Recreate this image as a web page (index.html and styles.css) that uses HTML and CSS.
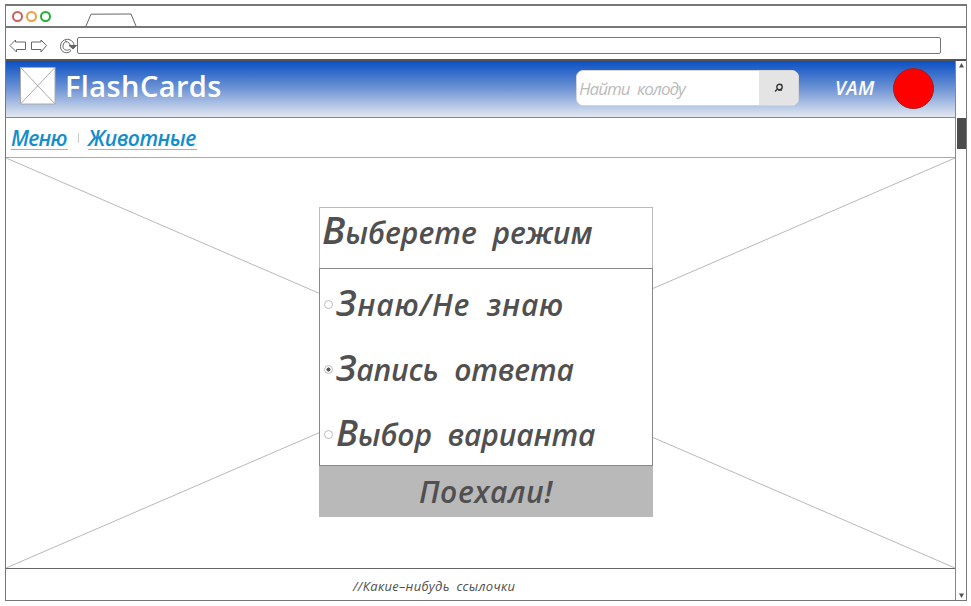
FILE: index.html
```html
<!DOCTYPE html>
<html lang="ru">
<head>
<meta charset="utf-8">
<title>FlashCards</title>
<link rel="stylesheet" href="styles.css">
</head>
<body>
<div class="browser">
  <div class="titlebar">
    <i class="dot red"></i><i class="dot orange"></i><i class="dot green"></i>
    <svg class="tab" width="52" height="13" viewBox="0 0 52 13"><path d="M1 13 6 1.2 46 1 51 13" /></svg>
  </div>
  <div class="toolbar">
    <svg class="nav" width="70" height="18" viewBox="0 0 70 18">
      <path d="M1 8.500 6.500 3V5H16.500V12.500H7.500V15Z M22.500 5H32V3L37.500 8.500 32 15V12.500H22.500Z"/>
      <path d="M62 13.500C59 17.500 51.500 16 51.500 9.500 51.500 4.500 55.500 1.500 60 2.500 63.500 3.500 65 6 65 8.500M54 9.500C54 5.500 57 3.500 59.500 5.500L62 9M54 9.500C54 13 58 14 60.500 12.500L62 13.500M56 3.500 58 5"/>
      <path class="tip" d="M60 8.500H67.500L64 12Z"/>
    </svg>
    <div class="address"></div>
  </div>
  <div class="viewport">
    <main class="page">
      <header class="header">
        <svg class="logo" width="36" height="38" viewBox="0 0 36 38"><path d="M.5.5H35V37H.5ZL35 37M35 .5.5 37"/></svg>
        <h1 class="brand">FlashCards</h1>
        <div class="search">
          <span class="query">Найти колоду</span>
          <button class="find" aria-label="Найти"><svg width="10" height="10" viewBox="0 0 10 10"><path d="M3.500 6 1 8.500"/><circle cx="5.500" cy="4" r="2.700"/><path d="M4 7H8"/></svg></button>
        </div>
        <span class="user">VAM</span>
        <i class="avatar"></i>
      </header>
      <nav class="crumbs"><a class="menu">Меню</a><i class="divider"></i><a class="animals">Животные</a></nav>
      <section class="hero">
        <svg class="cross" viewBox="0 0 950 411" preserveAspectRatio="none"><path d="M0 0 950 411M950 0 0 411"/></svg>
        <form class="card">
          <h2 class="question">Выберете режим</h2>
          <div class="options">
            <label class="option know"><i class="radio"></i><span>Знаю/Не знаю</span></label>
            <label class="option write"><i class="radio checked"></i><span>Запись ответа</span></label>
            <label class="option choose"><i class="radio"></i><span>Выбор варианта</span></label>
          </div>
          <button class="go" type="button">Поехали!</button>
        </form>
      </section>
      <footer class="footer">//Какие–нибудь ссылочки</footer>
    </main>
    <div class="scrollbar">
      <svg width="7" height="5" viewBox="0 0 7 5"><path d="M3.500 0 6 4.500H1Z"/></svg>
      <i class="thumb"></i>
      <svg width="7" height="5" viewBox="0 0 7 5"><path d="M1 .5H6L3.500 5Z"/></svg>
    </div>
  </div>
</div>
</body>
</html>
```

FILE: styles.css
```css
* { box-sizing: border-box; }
body { margin: 0; padding: 4px 4px 5px 5px; height: 606px; overflow: hidden; background: #fff; color: #505050; font-family: "Open Sans", "Noto Sans", sans-serif; }
svg { display: block; fill: none; stroke: #666; stroke-width: 1; flex: none; }
h1, h2 { margin: 0; font-weight: 600; }
button { border: 0; padding: 0; font: inherit; color: inherit; }
.browser { width: 962px; height: 597px; display: flex; flex-direction: column; border: 1px solid #777; border-top: 2px solid #777; }
.titlebar { flex: none; height: 22px; display: flex; gap: 4px; padding: 5px 0 0 6px; border-bottom: 2px solid #777; }
.dot { width: 11px; height: 11px; margin-right: -1px; border: 2px solid; border-radius: 50%; }
.red { color: #cb6060; }
.orange { color: #e9a04a; }
.green { color: #25ad35; }
.tab { margin: 2px 0 0 31px; }
.toolbar { flex: none; height: 33px; display: flex; border-bottom: 2px solid #555; padding: 9px 0 0 3px; }
.tip { fill: #666; }
.address { width: 864px; height: 17px; margin-left: -2px; border: 1px solid #777; border-radius: 2px; background: #fff; }
.viewport { flex: 1; display: flex; min-height: 0; }
.page { width: 950px; display: flex; flex-direction: column; border-right: 1px solid #888; }
.header { flex: none; height: 57px; display: flex; align-items: flex-start; background: linear-gradient(#0a50c3, #7095d5 50%, #e3e8f1); border-bottom: 1px solid #888; }
.logo { margin: 6px 0 0 14px; stroke: #aaa; }
.logo path { fill: #fff; }
.brand { width: 160px; margin: 3px 0 0 9px; color: #fff; font-size: 29px; line-height: 44px; letter-spacing: .4px; white-space: nowrap; }
.search { width: 223px; height: 36px; margin: 9px 0 0 351px; display: flex; border: 1px solid #d5d5d5; border-radius: 7px; overflow: hidden; background: #fff; }
.query { width: 182px; padding-left: 2px; color: #bbb; font-size: 17px; font-style: italic; font-weight: 500; line-height: 35px; white-space: nowrap; letter-spacing: -1px; word-spacing: 4px; }
.find { flex: 1; display: flex; justify-content: center; align-items: center; background: #e4e4e4; }
.find svg { stroke: #333; stroke-width: 1.4; }
.user { width: 42px; margin: 14px 0 0 36px; color: #fff; font-size: 19px; font-style: italic; font-weight: 600; line-height: 26px; letter-spacing: .5px; }
.avatar { width: 41px; height: 41px; margin: 7px 0 0 16px; border: 1px solid #922; border-radius: 50%; background: #f00; }
.crumbs { flex: none; height: 40px; display: flex; align-items: flex-start; padding: 7px 0 0 5px; border-bottom: 1px solid #aaa; color: #138dcc; font-size: 21px; font-weight: 600; font-style: italic; line-height: 26px; }
.crumbs a { height: 25px; border-bottom: 1px solid #7cbfe2; white-space: nowrap; }
.menu { width: 57px; letter-spacing: -.8px; }
.animals { width: 109px; letter-spacing: -.5px; }
.divider { width: 1px; height: 10px; margin: 8px 9px 0 10px; background: #ccc; }
.hero { flex: none; position: relative; height: 411px; padding: 49px 0 0 313px; border-bottom: 1px solid #666; }
.cross { position: absolute; inset: 0; width: 100%; height: 100%; stroke: #b8b8b8; }
.card { position: relative; width: 334px; height: 310px; display: flex; flex-direction: column; background: #fff; }
.question { flex: none; height: 61px; padding-left: 2px; border: 1px solid #bbb; border-bottom: 0; font-size: 30px; font-weight: 600; font-style: italic; line-height: 42px; letter-spacing: 0; word-spacing: 8px; white-space: nowrap; }
.question::first-letter { font-size: 38px; }
.options { flex: none; height: 198px; border: 1px solid #888; padding-top: 3px; }
.option { height: 65px; display: flex; align-items: center; padding-left: 4px; gap: 3px; font-size: 30px; font-weight: 600; font-style: italic; line-height: 38px; word-spacing: 8px; white-space: nowrap; }
.option span { display: block; margin-top: -2px; }
.option span::first-letter { font-size: 36px; }
.know { letter-spacing: .8px; }
.write { letter-spacing: -.15px; }
.choose { letter-spacing: -.15px; }
.radio { width: 9px; height: 9px; border: 1px solid #bbb; border-radius: 50%; }
.checked { background: radial-gradient(circle, #555 0 1.8px, #fff 2.3px); }
.go { flex: 1; background: #b9b9b9; font-size: 30px; font-weight: 600; font-style: italic; line-height: 48px; letter-spacing: .6px; }
.footer { flex: 1; padding-left: 347px; font-size: 13px; font-style: italic; line-height: 34px; letter-spacing: .3px; word-spacing: 3px; white-space: nowrap; }
.scrollbar { flex: 1; display: flex; flex-direction: column; align-items: center; padding: 2px 0; }
.scrollbar svg { fill: #555; stroke: none; }
.thumb { width: 9px; height: 31px; margin: 50px 0 auto; background: #4c4c4c; }
```
